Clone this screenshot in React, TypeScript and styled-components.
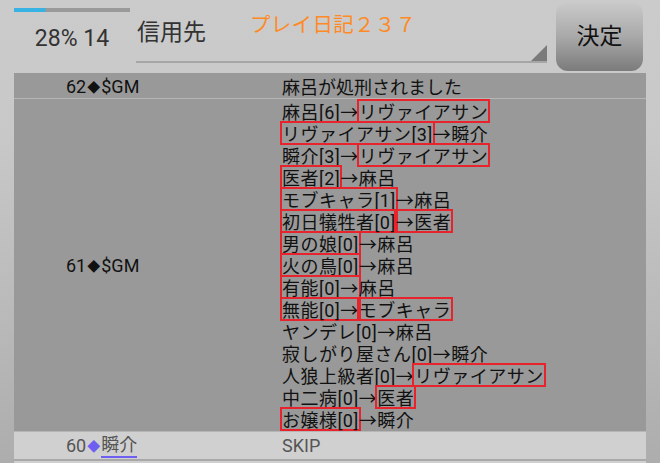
import React from "react";
import styled, { createGlobalStyle } from "styled-components";

const GlobalStyle = createGlobalStyle`
  html, body {
    margin: 0;
    padding: 0;
  }
  body {
    width: 660px;
    height: 463px;
    overflow: hidden;
    background: linear-gradient(#cbcbcb 0%, #c8c8c8 30%, #adadad 100%);
    font-family: Roboto, "Noto Sans CJK JP", sans-serif;
  }
`;

const Screen = styled.div`
  width: 660px;
  height: 463px;
  display: flex;
  flex-direction: column;
  overflow: hidden;
`;

const Header = styled.div`
  height: 73px;
  flex: none;
  display: flex;
  align-items: flex-start;
  padding-left: 14px;
  box-sizing: border-box;
`;

const Progress = styled.div`
  width: 116px;
  display: flex;
  flex-direction: column;
  align-items: center;
  padding-top: 8px;
`;

const Track = styled.div`
  width: 100%;
  height: 4px;
  background: #9a9a9a;
  display: flex;
`;

const Fill = styled.div<{ $pct: number }>`
  width: ${p => p.$pct}%;
  height: 100%;
  background: #37b2e2;
  border-radius: 0 2px 2px 0;
`;

const Count = styled.div`
  margin-top: 13px;
  font-size: 23px;
  line-height: 27px;
  color: #333;
`;

const Spinner = styled.div`
  position: relative;
  margin-left: 6px;
  width: 411px;
  height: 63px;
  box-sizing: border-box;
  border-bottom: 2px solid #a6a6a6;
  display: flex;
  align-items: flex-start;
`;

const SpinnerLabel = styled.div`
  margin-top: 21px;
  margin-left: 1px;
  font-size: 23px;
  line-height: 23px;
  color: #333;
`;

const Hint = styled.div`
  margin-top: 15px;
  margin-left: 44px;
  font-size: 20.5px;
  line-height: 21px;
  letter-spacing: 0.3px;
  color: #ff8a25;
`;

// small corner triangle of the dropdown
const Corner = styled.div`
  position: absolute;
  right: 0;
  bottom: 0;
  width: 0;
  height: 0;
  border-style: solid;
  border-width: 0 0 16px 16px;
  border-color: transparent transparent #7a7a7a transparent;
`;

const Button = styled.button`
  margin: 2px 0 0 9px;
  width: 87px;
  height: 69px;
  border: 0;
  border-radius: 12px;
  background: linear-gradient(#cacaca 0%, #a9a9a9 50%, #7b7b7b 100%);
  font-family: Roboto, "Noto Sans CJK JP", sans-serif;
  font-size: 23px;
  color: #111;
  padding: 0 0 6px;
`;

const Table = styled.div`
  flex: 1;
  margin: 0 14px;
  background: #999999;
  display: flex;
  flex-direction: column;
  color: #111;
  font-size: 18px;
`;

const Row = styled.div<{ $skip?: boolean; $height?: number }>`
  display: grid;
  grid-template-columns: 268px 1fr;
  align-items: center;
  ${p => (p.$height ? `height: ${p.$height}px;` : "")}
  background: ${p => (p.$skip ? "#d0d0d0" : "transparent")};
  color: ${p => (p.$skip ? "#555" : "#111")};
  border-bottom: ${p => (p.$skip ? "2px solid #a8a8a8" : "1px solid #b6b6b6")};
  box-sizing: border-box;
`;

const Filler = styled.div`
  flex: 1;
  background: #d0d0d0;
`;

const Who = styled.div`
  padding-left: 52px;
  white-space: nowrap;
  display: flex;
  align-items: center;
`;

const Diamond = styled.span<{ $tone?: string }>`
  color: ${p => p.$tone || "#111"};
  font-size: 13px;
  margin: 0 1px;
`;

const Name = styled.span<{ $link?: boolean }>`
  ${p => (p.$link ? "border-bottom: 2px solid #6e5ff0; line-height: 22px;" : "")}
`;

const Votes = styled.div`
  display: flex;
  flex-direction: column;
  padding: 1px 0;
  letter-spacing: 0.5px;
`;

const Line = styled.div`
  height: 22px;
  display: flex;
  align-items: center;
  white-space: nowrap;
`;

const Mark = styled.span`
  box-sizing: border-box;
  height: 24px;
  display: flex;
  align-items: center;
  margin: 0 -2px;
  border: 2px solid #e8232b;
`;

type Seg = [string, boolean?];

const votes: Seg[][] = [
  [["麻呂[6]→"], ["リヴァイアサン", true]],
  [["リヴァイアサン[3]", true], ["→瞬介"]],
  [["瞬介[3]→"], ["リヴァイアサン", true]],
  [["医者[2]", true], ["→麻呂"]],
  [["モブキャラ[1]", true], ["→麻呂"]],
  [["初日犠牲者[0]", true], ["→医者", true]],
  [["男の娘[0]", true], ["→麻呂"]],
  [["火の鳥[0]", true], ["→麻呂"]],
  [["有能[0]→", true], ["麻呂"]],
  [["無能[0]→", true], ["モブキャラ", true]],
  [["ヤンデレ[0]→麻呂"]],
  [["寂しがり屋さん[0]→瞬介"]],
  [["人狼上級者[0]→"], ["リヴァイアサン", true]],
  [["中二病[0]→"], ["医者", true]],
  [["お嬢様[0]", true], ["→瞬介"]],
];

export default function App() {
  return (
    <>
      <GlobalStyle />
      <Screen>
        <Header>
          <Progress>
            <Track>
              <Fill $pct={28} />
            </Track>
            <Count>28% 14</Count>
          </Progress>
          <Spinner>
            <SpinnerLabel>信用先</SpinnerLabel>
            <Hint>プレイ日記２３７</Hint>
            <Corner />
          </Spinner>
          <Button>決定</Button>
        </Header>
        <Table>
          <Row $height={26}>
            <Who>
              62<Diamond>◆</Diamond>$GM
            </Who>
            <div>麻呂が処刑されました</div>
          </Row>
          <Row>
            <Who>
              61<Diamond>◆</Diamond>$GM
            </Who>
            <Votes>
              {votes.map((line, i) => (
                <Line key={i}>
                  {line.map(([text, boxed], j) =>
                    boxed ? <Mark key={j}>{text}</Mark> : <span key={j}>{text}</span>
                  )}
                </Line>
              ))}
            </Votes>
          </Row>
          <Row $skip $height={29}>
            <Who>
              60<Diamond $tone="#6e5ff0">◆</Diamond>
              <Name $link>瞬介</Name>
            </Who>
            <div>SKIP</div>
          </Row>
          <Filler />
        </Table>
      </Screen>
    </>
  );
}
